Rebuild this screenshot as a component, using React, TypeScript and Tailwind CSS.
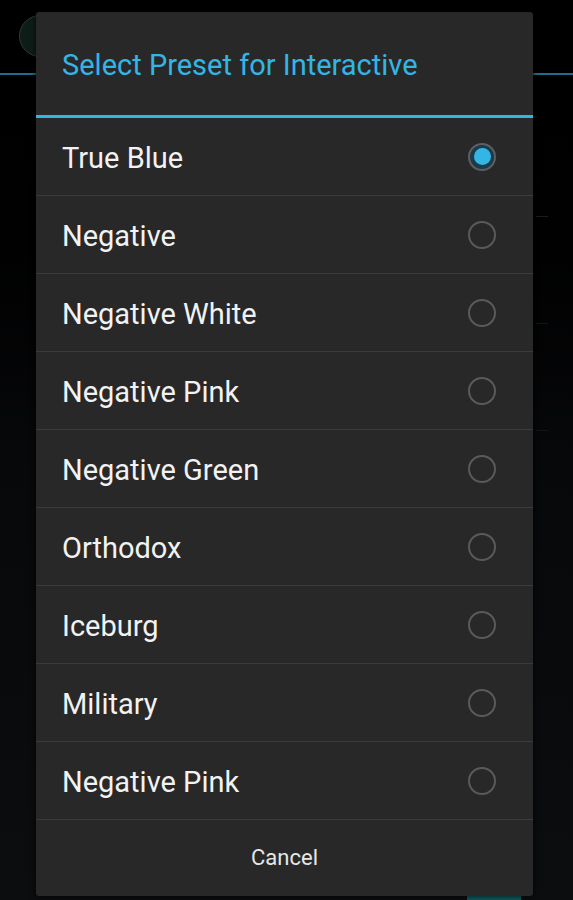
import React, { useState } from 'react';

const presets = [
  'True Blue',
  'Negative',
  'Negative White',
  'Negative Pink',
  'Negative Green',
  'Orthodox',
  'Iceburg',
  'Military',
  'Negative Pink',
];

function Radio({ checked }: { checked: boolean }) {
  if (checked) {
    return (
      <span className="flex h-[28px] w-[28px] items-center justify-center rounded-full border-2 border-[#5b5f63] bg-[#1c3a48]">
        <span className="h-[17px] w-[17px] rounded-full bg-[#33b5e5]" />
      </span>
    );
  }
  return <span className="h-[28px] w-[28px] rounded-full border-2 border-[#5a5a5a]" />;
}

export default function App() {
  const [selected, setSelected] = useState(0);

  return (
    <div className="relative h-[900px] w-[573px] overflow-hidden bg-gradient-to-b from-[#000000] via-[#07080a] to-[#0c0d0f] font-['Roboto',sans-serif]">
      {/* Screen behind the dialog */}
      <div className="absolute left-[19px] top-[15px] h-[42px] w-[42px] rounded-full border border-[#2d3a36] bg-[#0e1d18]" />
      <div className="absolute left-0 right-0 top-[73px] h-[2px] bg-[#1f6f8c]" />
      <div className="absolute left-[536px] top-[216px] h-[1px] w-[12px] bg-[#1a1c1e]" />
      <div className="absolute left-[536px] top-[323px] h-[1px] w-[12px] bg-[#121416]" />
      <div className="absolute left-[536px] top-[430px] h-[1px] w-[12px] bg-[#121416]" />
      <div className="absolute bottom-0 left-[467px] h-[6px] w-[54px] bg-[#0f5a5e]" />

      {/* Dialog */}
      <div className="relative ml-[36px] mt-[12px] flex w-[497px] flex-col overflow-hidden rounded-[3px] bg-[#282828] shadow-[0_0_6px_rgba(0,0,0,0.8)]">
        <div className="flex h-[103px] items-center pl-[26px] pt-[3px]">
          <span className="text-[29px] leading-none text-[#33b5e5]">Select Preset for Interactive</span>
        </div>
        <div className="h-[3px] bg-[#33b5e5]" />
        {presets.map((name, i) => (
          <div key={i} onClick={() => setSelected(i)} className="flex h-[78px] cursor-pointer items-center justify-between border-b border-[#3b3b3b] pl-[26px] pr-[37px]">
            <span className="pt-[3px] text-[29px] leading-none text-[#f2f2f2]">{name}</span>
            <Radio checked={selected === i} />
          </div>
        ))}
        <div className="flex h-[76px] items-center justify-center">
          <span className="text-[22px] leading-none text-[#e6e6e6]">Cancel</span>
        </div>
      </div>
    </div>
  );
}
